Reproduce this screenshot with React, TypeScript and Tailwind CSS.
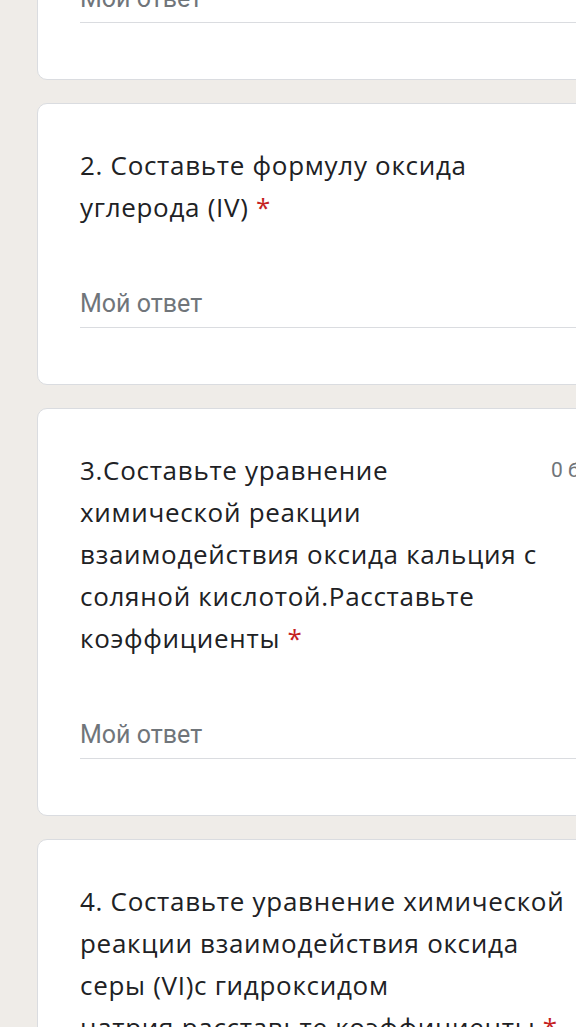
const TITLE_FONT = "font-['Open_Sans',sans-serif]";

function Required() {
  return <span className="text-[#c5221f]"> *</span>;
}

function AnswerInput() {
  return (
    <div className="border-b-[1.5px] border-[#dadce0] pb-[8px]">
      <div className="font-['Roboto',sans-serif] text-[25px] leading-[30px] text-[#70757a]">
        Мой ответ
      </div>
    </div>
  );
}

function Card({
  lines,
  points,
}: {
  lines: string[];
  points?: string;
}) {
  return (
    <div className="w-[620px] rounded-[10px] border border-[#dadce0] bg-white px-[42px] pt-[40px] pb-[56px]">
      <div className="flex items-start">
        <div
          className={`w-[471px] shrink-0 whitespace-nowrap text-[26px] leading-[42px] tracking-[0.7px] text-[#202124] ${TITLE_FONT}`}
        >
          {lines.map((line, i) => (
            <div key={i}>
              {line}
              {i === lines.length - 1 && <Required />}
            </div>
          ))}
        </div>
        {points && (
          <div className="whitespace-nowrap font-['Roboto',sans-serif] text-[21px] leading-[42px] text-[#70757a]">
            {points}
          </div>
        )}
      </div>
      <div className="mt-[61px]">
        <AnswerInput />
      </div>
    </div>
  );
}

export default function App() {
  return (
    <div className="h-[1027px] w-[576px] overflow-hidden bg-[#efece8] pl-[37px]">
      <div className="flex flex-col gap-[23px]">
        <div className="-mt-[59px] w-[620px] rounded-[10px] border border-[#dadce0] bg-white px-[42px] pt-[42px] pb-[56px]">
          <AnswerInput />
        </div>
        <Card lines={["2. Составьте формулу оксида", "углерода (IV)"]} />
        <Card
          points="0 баллов"
          lines={[
            "3.Составьте уравнение",
            "химической реакции",
            "взаимодействия оксида кальция с",
            "соляной кислотой.Расставьте",
            "коэффициенты",
          ]}
        />
        <Card
          lines={[
            "4. Составьте уравнение химической",
            "реакции взаимодействия оксида",
            "серы (VI)с гидроксидом",
            "натрия.расставьте коэффициенты",
          ]}
        />
      </div>
    </div>
  );
}
